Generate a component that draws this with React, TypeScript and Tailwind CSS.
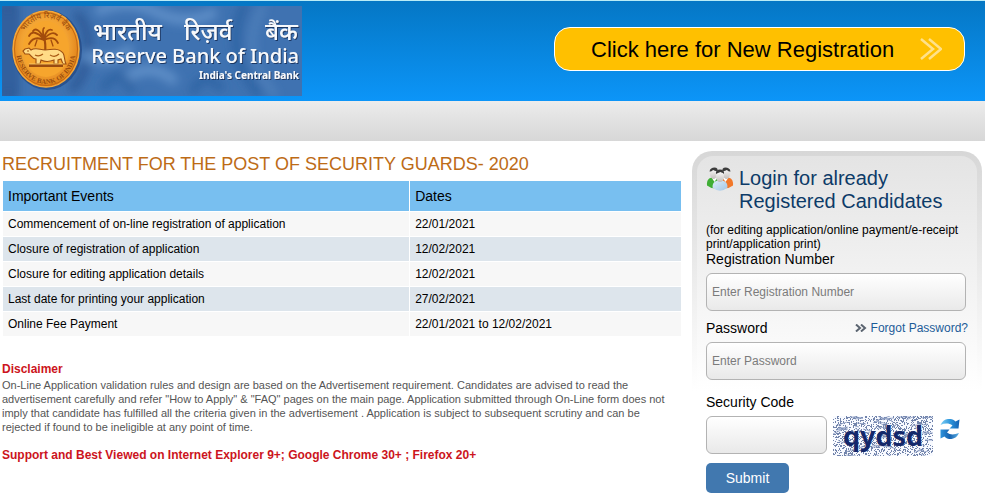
import { useState } from "react";

const EVENTS = [
  { name: "Commencement of on-line registration of application", date: "22/01/2021" },
  { name: "Closure of registration of application", date: "12/02/2021" },
  { name: "Closure for editing application details", date: "12/02/2021" },
  { name: "Last date for printing your application", date: "27/02/2021" },
  { name: "Online Fee Payment", date: "22/01/2021 to 12/02/2021" },
];

const FIELD =
  "block h-[38px] rounded-md border border-[#b3b3b3] bg-linear-to-b from-white to-[#e9e9e9] px-[5px] text-xs text-black placeholder:text-[#7b7b7b]";

// speckles and short strokes behind the captcha letters
function captchaNoise() {
  let seed = 20;
  const next = (max: number) => {
    seed = (seed * 1103515245 + 12345) % 2147483648;
    return Math.floor((seed / 2147483648) * max);
  };
  let dots = "";
  for (let i = 0; i < 1500; i++) dots += `M${next(100)} ${next(40)}h1v1h-1z`;
  let lines = "";
  for (let i = 0; i < 70; i++) lines += `M${next(94)} ${next(40)}l${4 + next(9)} ${next(9) - 4}`;
  return { dots, lines };
}

const NOISE = captchaNoise();

function BankLogo() {
  return (
    <svg width="300" height="90" viewBox="0 0 300 90" role="img" aria-label="Reserve Bank of India">
      <defs>
        <radialGradient id="gold" cx="48%" cy="45%" r="60%">
          <stop offset="0" stopColor="#fbc04a" />
          <stop offset="0.6" stopColor="#f2a232" />
          <stop offset="1" stopColor="#d9750f" />
        </radialGradient>
        <filter id="soft" x="-30%" y="-30%" width="160%" height="160%">
          <feGaussianBlur stdDeviation="5" />
        </filter>
        <filter id="shade" x="-5%" y="-10%" width="110%" height="130%">
          <feDropShadow dx="1" dy="1" stdDeviation="0.6" floodColor="#16305c" floodOpacity="0.9" />
        </filter>
        <path id="arcTop" d="M18 43A26 31 0 0 1 70 43" />
        <path id="arcBottom" d="M14 43A30 35 0 0 0 74 43" />
        <clipPath id="plate">
          <rect width="300" height="90" />
        </clipPath>
      </defs>
      <g clipPath="url(#plate)">
        <rect width="300" height="90" fill="#3f72b1" />
        <g filter="url(#soft)" fill="none">
          <path d="M0 0H12V90H0zM72 8C92 15 90 70 68 84" stroke="#2d5a97" strokeWidth="9" />
          <path d="M94 6q30-15 60 0t60 0M82 48q24 14 48-6M120 76q26-24 54 0" stroke="#5f8fc8" strokeWidth="10" />
          <path d="M244 -4q-26 48 14 94M190 88q12-28 30-4M100 84q18-28 30 2" stroke="#2f63a3" strokeWidth="8" />
          <path d="M262 0q-28 44 12 90" stroke="#5585be" strokeWidth="5" />
        </g>
        <ellipse cx="45" cy="44" rx="35" ry="40" fill="#1f427d" opacity="0.65" />
        <ellipse cx="44" cy="43" rx="33" ry="38" fill="url(#gold)" stroke="#f7a83a" strokeWidth="1.5" />
        <ellipse cx="44" cy="43" rx="31.5" ry="36.5" fill="none" stroke="#b8590c" strokeWidth="0.7" />
        <ellipse cx="44" cy="43" rx="23" ry="28" fill="#f6a52d" />
        <g fill="#9a4d0e" textAnchor="middle">
          <text fontFamily="'Noto Sans', FreeSans, sans-serif" fontSize="8">
            <textPath href="#arcTop" startOffset="50%">
              भारतीय रिज़र्व बैंक
            </textPath>
          </text>
          <text fontFamily="'Liberation Serif', serif" fontSize="7" fontWeight="700">
            <textPath href="#arcBottom" startOffset="50%">
              RESERVE BANK OF INDIA
            </textPath>
          </text>
        </g>
        <g fill="none" stroke="#a34c0c" strokeLinecap="round">
          <path d="M43 47Q44 38 42 31" strokeWidth="2.2" />
          <path d="M42 34Q32 29 27 38M42 33Q31 22 27 30M42 32Q35 20 31 25M42 32Q40 23 42 22M42 32Q45 22 50 24M42 33Q50 24 55 29M42 34Q52 29 56 37" strokeWidth="1.8" />
          <path d="M35 34l-2 6M49 34l2 6" strokeWidth="1.3" />
        </g>
        <path
          d="M23 43l4-1 2 2c5-3 9 0 14 0 7-1 14-2 18 3 2 3 1 7 3 11h-3l-2-5-3 1v4h-4v-4c-5 2-9 2-13 0l-1 4h-4v-5c-4 0-5-4-7-5h-4l-2-3z"
          fill="#ffdb86"
          stroke="#9c4d10"
          strokeWidth="1.1"
        />
        <path d="M33 49q4 2 8-1M48 49q5 3 9-1M25 45h2" fill="none" stroke="#a95a14" strokeWidth="1.2" />
        <rect x="27" y="58" width="34" height="3" fill="#9a4b10" />
        <path d="M27 58h34" stroke="#ffd46f" strokeWidth="0.8" />
        <g fill="#f7f9fc" filter="url(#shade)">
          <g fontFamily="'Noto Sans', FreeSans, sans-serif" fontSize="24" fontWeight="500">
            <text x="91" y="34">
              भारतीय
            </text>
            <text x="182" y="34">
              रिज़र्व
            </text>
            <text x="263" y="34">
              बैंक
            </text>
          </g>
          <text x="297" y="57" textAnchor="end" fontFamily="'Noto Sans', sans-serif" fontSize="20" fontWeight="500">
            Reserve Bank of India
          </text>
          <text x="297" y="73" textAnchor="end" fontFamily="'Noto Sans', sans-serif" fontSize="10" fontWeight="700">
            India's Central Bank
          </text>
        </g>
      </g>
    </svg>
  );
}

function PeopleIcon() {
  return (
    <svg className="shrink-0" width="28" height="25" viewBox="0 0 28 25" aria-hidden="true">
      <defs>
        <linearGradient id="shirt" x1="0" x2="1" y2="1">
          <stop offset="0" stopColor="#dceefb" />
          <stop offset="1" stopColor="#a3c6e5" />
        </linearGradient>
        <linearGradient id="face" x2="0" y2="1">
          <stop offset="0" stopColor="#ffffff" />
          <stop offset="1" stopColor="#c4bfbc" />
        </linearGradient>
      </defs>
      <path d="M1 18.500C0.500 13 3 10.500 7 10.500L13 13V20Q7 23 1 18.500z" fill="#3fae35" />
      <path d="M27 18.500C27.500 13 25 10.500 21 10.500L15 13V20Q21 23 27 18.500z" fill="#f2782a" />
      <path d="M5.500 10.500L8.500 15L11 11zM22.500 10.500L19.500 15L17 11z" fill="#fff" />
      <ellipse cx="7.500" cy="6.500" rx="3.500" ry="5.500" fill="url(#face)" />
      <ellipse cx="20.500" cy="6.500" rx="3.500" ry="5.500" fill="url(#face)" />
      <path d="M3.500 4.500C4 1.500 6 0.500 8.500 0.500 11 0.500 12 2 11.500 4 9 4 8 3.500 7 3 6 4.500 5 4.500 3.500 4.500z" fill="#3d3d3d" />
      <path d="M24.500 4.500C24 1.500 22 0.500 19.500 0.500 17 0.500 16 2 16.500 4 19 4 20 3.500 21 3 22 4.500 23 4.500 24.500 4.500z" fill="#3d3d3d" />
      <path d="M6.500 20.500C6.500 15 9.500 13.500 14 13.500S21.500 15 21.500 20.500Q14 27 6.500 20.500z" fill="url(#shirt)" />
      <ellipse cx="14" cy="9.500" rx="4" ry="5.500" fill="url(#face)" />
      <path d="M10 7C9.500 4 11 2.500 14 2.500 17 2.500 18.500 4 18 7 17 6 15.500 5.500 14.500 5 13 6 11 6 10 7z" fill="#3a3a3a" />
    </svg>
  );
}

function RefreshIcon() {
  return (
    <svg width="20" height="20" viewBox="0 0 20 20" aria-hidden="true">
      <defs>
        <linearGradient id="arrowTop" x1="0" x2="1">
          <stop offset="0" stopColor="#7fd0f5" />
          <stop offset="0.5" stopColor="#2f97dc" />
          <stop offset="1" stopColor="#1462b4" />
        </linearGradient>
        <linearGradient id="arrowBottom" x1="0" x2="1">
          <stop offset="0" stopColor="#2f93dc" />
          <stop offset="0.5" stopColor="#1562b0" />
          <stop offset="1" stopColor="#5eb2e6" />
        </linearGradient>
      </defs>
      <path d="M0.500 6C3-0.500 11-2 15.500 2.500L19.500 0.500 18.500 9.500H9.500L12.500 6.500C9 4 5 4 0.500 6z" fill="url(#arrowTop)" />
      <path d="M19 14C16.500 20.500 8.500 22 4.500 17.500L0.500 19.500V10.500H9.500L7 13.500C10 16 14 16 19 14z" fill="url(#arrowBottom)" />
    </svg>
  );
}

function LoginPanel() {
  const [regNo, setRegNo] = useState("");
  const [password, setPassword] = useState("");
  const [code, setCode] = useState("");

  return (
    <aside className="w-[290px] shrink-0 rounded-t-[20px] bg-linear-to-b from-[#d7d7d7] to-white to-[240px] px-[5px] pt-[5px]">
      <form
        onSubmit={(e) => e.preventDefault()}
        className="rounded-t-2xl bg-linear-to-b from-[#e4e4e4] to-white to-[235px] px-[9px] pt-[11px]"
      >
        <div className="flex gap-[5px]">
          <PeopleIcon />
          <h2 className="text-xl leading-[23px] text-[#0d3b68]">Login for already Registered Candidates</h2>
        </div>
        <p className="mt-[10px] text-xs leading-[14px]">
          (for editing application/online payment/e-receipt print/application print)
        </p>
        <label htmlFor="regNo" className="block text-sm leading-4">
          Registration Number
        </label>
        <input
          id="regNo"
          value={regNo}
          onChange={(e) => setRegNo(e.target.value)}
          placeholder="Enter Registration Number"
          className={`${FIELD} mt-[6px] w-[260px]`}
        />
        <div className="mt-[9px] flex items-center justify-between">
          <label htmlFor="password" className="text-sm leading-4">
            Password
          </label>
          <a href="#forgot" className="flex items-center gap-1 text-xs leading-4 text-[#1d5c98]">
            <svg width="12" height="8" viewBox="0 0 12 8" fill="none" stroke="#5b6470" strokeWidth="2" aria-hidden="true">
              <path d="M1 0.500l4 3.500-4 3.500M6 0.500l4 3.500-4 3.500" />
            </svg>
            Forgot Password?
          </a>
        </div>
        <input
          id="password"
          type="password"
          value={password}
          onChange={(e) => setPassword(e.target.value)}
          placeholder="Enter Password"
          className={`${FIELD} mt-[6px] w-[260px]`}
        />
        <label htmlFor="code" className="mt-[14px] block text-sm leading-4">
          Security Code
        </label>
        <div className="mt-[6px] flex">
          <input id="code" value={code} onChange={(e) => setCode(e.target.value)} className={`${FIELD} w-[121px]`} />
          <svg className="ml-[6px]" width="100" height="40" viewBox="0 0 100 40" role="img" aria-label="Captcha">
            <rect width="100" height="40" fill="#f8faff" />
            <path d={NOISE.dots} fill="#7284ab" />
            <path d={NOISE.lines} fill="none" stroke="#8496bd" strokeWidth="0.8" />
            <text x="10" y="30" fontFamily="'Noto Sans', sans-serif" fontSize="27" fontWeight="700" fill="#14286a">
              qydsd
            </text>
          </svg>
          <button type="button" aria-label="Refresh code" className="mt-[3px] ml-[7px] h-5 w-5">
            <RefreshIcon />
          </button>
        </div>
        <button type="submit" className="mt-[7px] h-[30px] w-[83px] rounded-[5px] bg-[#4178af] text-sm text-white">
          Submit
        </button>
      </form>
    </aside>
  );
}

export default function App() {
  return (
    <div className="bg-white font-['Liberation_Sans',Arial,sans-serif] text-black">
      <header className="flex items-center justify-between border-t border-[#b9ecf7] bg-linear-to-b from-[#0577c5] to-[#0c95f8] pt-[5px] pr-5 pb-[5px] pl-[2px]">
        <BankLogo />
        <a
          href="#register"
          className="mb-1 flex h-[44px] w-[411px] items-center justify-between rounded-2xl border border-white bg-[#ffc000] pr-[22px] pl-9 text-[22px]"
        >
          Click here for New Registration
          <svg width="22" height="22" viewBox="0 0 22 22" fill="none" stroke="#ffe18a" strokeWidth="2.500" aria-hidden="true">
            <path d="M1 1l12 10L1 21M9 1l12 10L9 21" />
          </svg>
        </a>
      </header>
      <div className="h-10 bg-linear-to-b from-[#ececec] to-[#d7d7d7]" />

      <div className="flex gap-[10px] pt-[10px] pr-[3px] pl-[2px]">
        <main className="min-w-0 flex-1">
          <h1 className="mt-[2px] text-lg leading-[22px] text-[#bd6b16]">
            RECRUITMENT FOR THE POST OF SECURITY GUARDS- 2020
          </h1>
          <table className="mt-[5px] w-full table-fixed border-separate border-spacing-px text-left text-xs">
            <thead>
              <tr className="h-[30px] bg-[#78bff0] text-sm">
                <th scope="col" className="w-[60%] px-[5px] font-normal">
                  Important Events
                </th>
                <th scope="col" className="px-[5px] font-normal">
                  Dates
                </th>
              </tr>
            </thead>
            <tbody>
              {EVENTS.map((ev) => (
                <tr key={ev.name} className="h-6 odd:bg-[#f7f7f7] even:bg-[#dde5ec]">
                  <td className="px-[5px]">{ev.name}</td>
                  <td className="px-[5px]">{ev.date}</td>
                </tr>
              ))}
            </tbody>
          </table>
          <h2 className="mt-6 text-xs leading-4 font-bold text-[#cc1420]">Disclaimer</h2>
          <p className="mt-[1px] pr-3 text-[11px] leading-[14px] text-[#555]">
            On-Line Application validation rules and design are based on the Advertisement requirement. Candidates are
            advised to read the advertisement carefully and refer "How to Apply" &amp; "FAQ" pages on the main page.
            Application submitted through On-Line form does not imply that candidate has fulfilled all the criteria
            given in the advertisement . Application is subject to subsequent scrutiny and can be rejected if found to
            be ineligible at any point of time.
          </p>
          <p className="mt-[13px] text-xs leading-4 font-bold text-[#cc1420]">
            Support and Best Viewed on Internet Explorer 9+; Google Chrome 30+ ; Firefox 20+
          </p>
        </main>
        <LoginPanel />
      </div>
    </div>
  );
}
